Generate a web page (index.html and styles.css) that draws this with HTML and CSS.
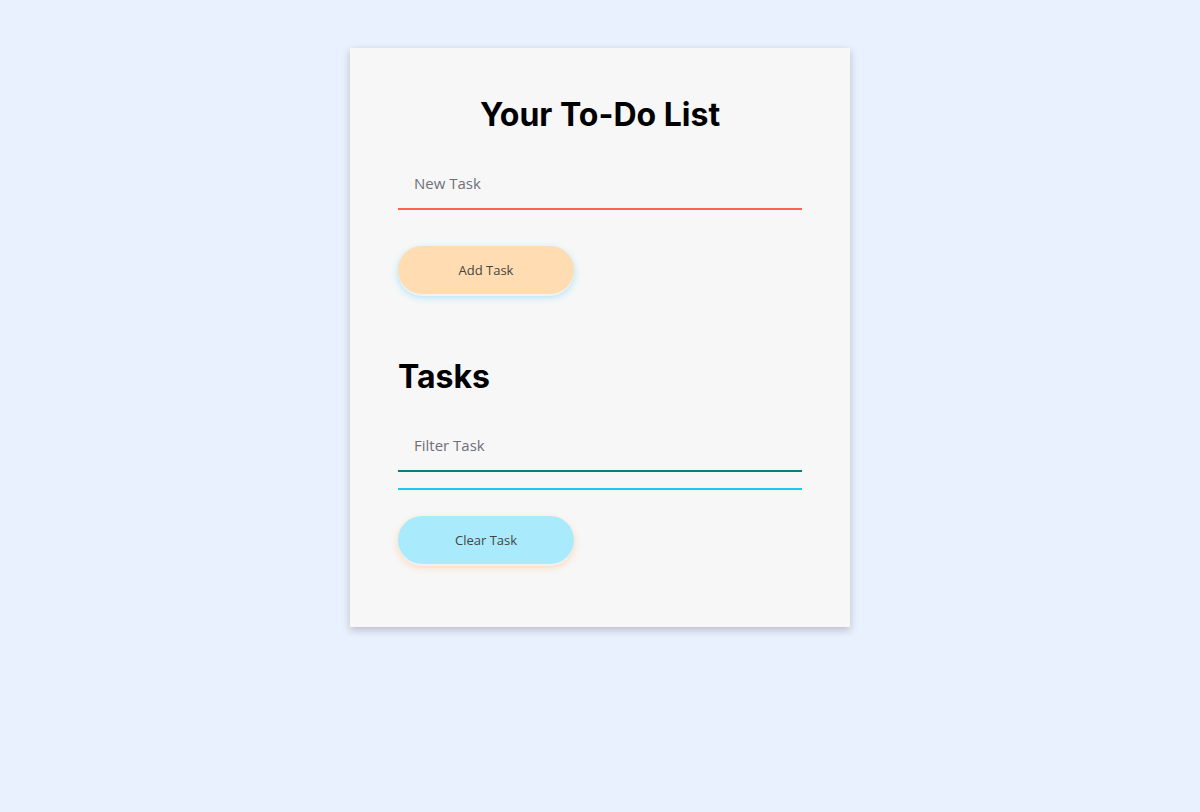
FILE: index.html
```html
<!DOCTYPE html>
<html lang="en">
<head>
<meta charset="utf-8">
<title>To-Do List</title>
<link rel="stylesheet" href="styles.css">
</head>
<body>
<main class="card">
  <h1 class="title">Your To-Do List</h1>
  <form class="add-form">
    <input class="field field-new" type="text" placeholder="New Task">
    <button class="btn btn-add" type="button">Add Task</button>
  </form>
  <h2 class="subtitle">Tasks</h2>
  <input class="field field-filter" type="text" placeholder="Filter Task">
  <ul class="task-list"></ul>
  <button class="btn btn-clear" type="button">Clear Task</button>
</main>
</body>
</html>
```

FILE: styles.css
```css
* { box-sizing: border-box; }

html, body {
  margin: 0;
  padding: 0;
}

body {
  background: #eaf1fe;
  font-family: "Open Sans", "Noto Sans", sans-serif;
  min-height: 812px;
}

.card {
  width: 500px;
  margin: 48px auto 0;
  background: #f7f7f7;
  padding: 47px 48px 63px;
  box-shadow: 0 3px 8px rgba(0, 0, 0, 0.22);
}

.title,
.subtitle {
  margin: 0;
  font-family: "Inter", "Roboto", sans-serif;
  font-weight: 700;
  font-size: 32px;
  line-height: 40px;
  color: #000;
}

.title {
  text-align: center;
}

.add-form {
  margin: 23px 0 0;
  display: flex;
  flex-direction: column;
  align-items: flex-start;
}

.field {
  display: block;
  width: 100%;
  height: 52px;
  padding: 14px 16px;
  border: none;
  border-bottom: 2px solid;
  background: transparent;
  font-family: "Open Sans", "Noto Sans", sans-serif;
  font-size: 15px;
  color: #333;
  outline: none;
}

.field::placeholder {
  color: #6f6f78;
}

.field-new {
  border-bottom-color: #ff6347;
}

.field-filter {
  margin-top: 23px;
  border-bottom-color: #008080;
}

.btn {
  display: block;
  width: 176px;
  height: 48px;
  border: none;
  border-radius: 24px;
  font-family: "Open Sans", "Noto Sans", sans-serif;
  font-size: 13px;
  color: #444;
  cursor: pointer;
}

.btn-add {
  margin-top: 36px;
  background: #ffdcb1;
  box-shadow: 0 2px 0 #f1f1f1, 0 3px 7px rgba(135, 220, 255, 0.75);
}

.subtitle {
  margin-top: 63px;
}

.task-list {
  list-style: none;
  margin: 16px 0 0;
  padding: 0;
  border-bottom: 2px solid #1ec8f5;
}

.btn-clear {
  margin-top: 26px;
  background: #a9ebfd;
  box-shadow: 0 2px 0 #f1f1f1, 0 3px 7px rgba(255, 200, 150, 0.75);
}
```
